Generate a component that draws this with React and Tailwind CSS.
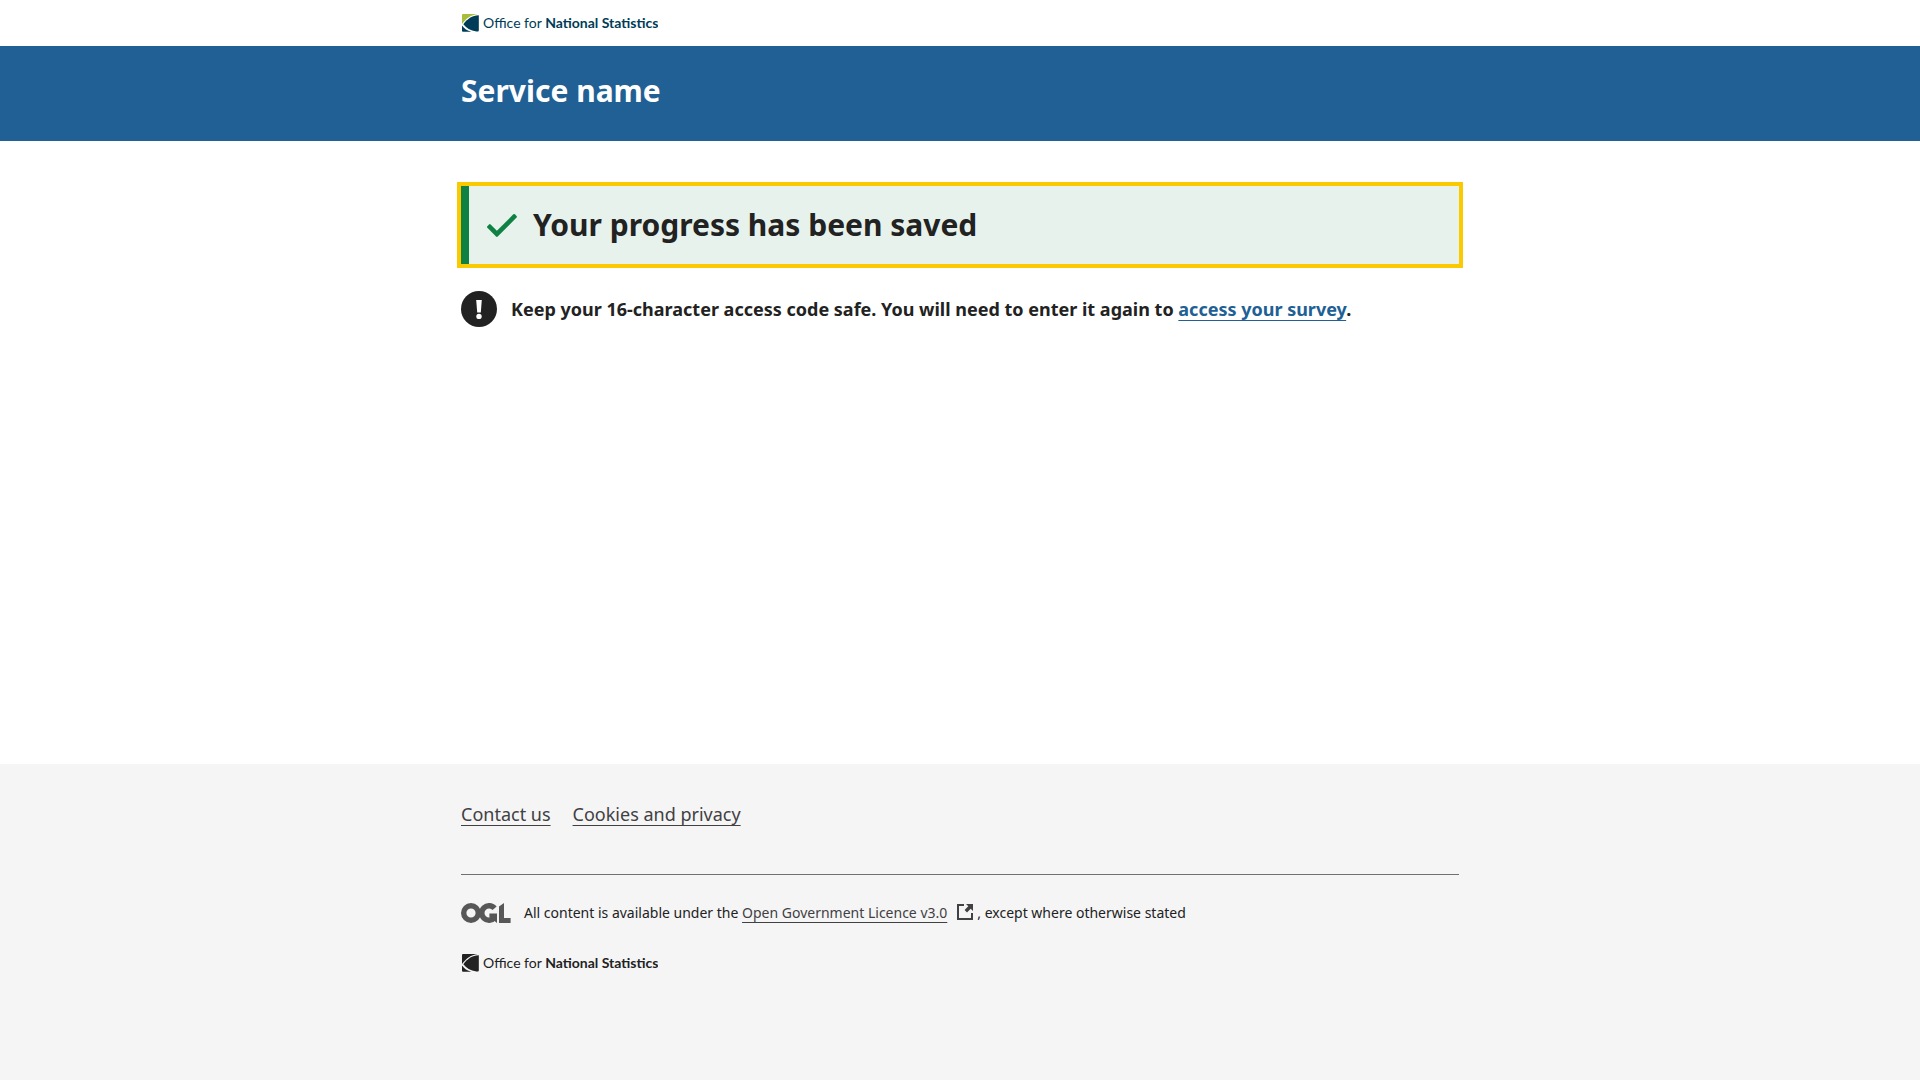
const TEXT_FONT = "font-['Noto_Sans',sans-serif]";

function OnsLogo({ mono = false }) {
  const ink = mono ? "#222222" : "#003c57";
  const accent = mono ? "#222222" : "#a8bd3a";
  return (
    <svg width="197" height="20" viewBox="0 0 197 20" role="img" aria-label="Office for National Statistics">
      <path d="M2 1H16.6C9.8 2 5.4 5.2 1 11V2Q1 1 2 1Z" fill={accent} />
      <path d="M17.8 2.2V17.4Q17.8 18.4 16.8 18.4H15.4C9.4 17.6 5 15 2.4 11.2C6.2 5.8 11 2.6 17.8 2.2Z" fill={ink} />
      <path d="M1 12.6C3 15.6 6.4 18 10.4 18.8H2Q1 18.8 1 17.8Z" fill={ink} />
      <text x="22" y="15" fill={ink} fontSize="14" fontFamily="Lato, sans-serif">
        Office for <tspan fontWeight="700">National Statistics</tspan>
      </text>
    </svg>
  );
}

function OglLogo() {
  return (
    <svg width="50" height="20" viewBox="0 0 50 20" role="img" aria-label="Open Government Licence" className="shrink-0">
      <g fill="none" stroke="#575757" strokeWidth="5.4">
        <circle cx="10" cy="10" r="7.3" />
        <path d="M33.6 5.2A7.3 7.3 0 1 0 33.6 14.8" />
      </g>
      <path d="M28.4 10.5h7.6v9.5l-3.4-2.8L28.4 14.5Z" fill="#575757" />
      <path d="M38 3.4L43 0V15h6.6v5H38Z" fill="#575757" />
    </svg>
  );
}

function CheckIcon() {
  return (
    <svg width="30" height="23" viewBox="0 0 13 10" fill="#0f8243" aria-hidden="true" className="shrink-0">
      <path
        d="M14.35,3.9l-.71-.71a.5.5,0,0,0-.71,0h0L5.79,10.34,3.07,7.61a.51.51,0,0,0-.71,0l-.71.71a.51.51,0,0,0,0,.71l3.78,3.78a.5.5,0,0,0,.71,0h0L14.35,4.6A.5.5,0,0,0,14.35,3.9Z"
        transform="translate(-1.51 -3.04)"
      />
    </svg>
  );
}

function WarningIcon() {
  return (
    <svg width="36" height="36" viewBox="0 0 36 36" role="img" aria-label="Warning" className="shrink-0">
      <circle cx="18" cy="18" r="18" fill="#222222" />
      <path d="M15.2 9H20.8L19.8 21.6H16.2Z" fill="#ffffff" />
      <circle cx="18" cy="25.4" r="2.7" fill="#ffffff" />
    </svg>
  );
}

function ExternalIcon() {
  return (
    <svg width="16" height="16" viewBox="0 0 16 16" fill="#414042" aria-hidden="true" className="mr-1 ml-2.5 inline-block align-[-2px]">
      <path d="M0 0H7V2H2V14H14V9H16V16H0Z" />
      <path d="M9 0H16V7L13.7 4.7L10 8.4L7.6 6L11.3 2.3Z" />
    </svg>
  );
}

function Container({ className = "", children }) {
  return <div className={`mx-auto w-full max-w-[1030px] px-4 ${className}`}>{children}</div>;
}

const footerLinks = ["Contact us", "Cookies and privacy"];

export default function App() {
  return (
    <div className={`flex min-h-screen flex-col bg-white text-lg text-[#222222] ${TEXT_FONT}`}>
      <header>
        <Container className="py-[13px]">
          <a href="#" className="block w-fit">
            <OnsLogo />
          </a>
        </Container>
        <div className="bg-[#206095]">
          <Container className="pt-6 pb-[29px]">
            <div className="text-3xl leading-[42px] font-bold text-white">Service name</div>
          </Container>
        </div>
      </header>

      <main className="grow">
        <Container className="pt-[45px]">
          <div className="flex items-center gap-4 border-l-8 border-[#0f8243] bg-[#e7f2ec] py-[18px] pl-[18px] outline-4 outline-[#fbc900]">
            <CheckIcon />
            <h1 className="text-3xl leading-[42px] font-bold">Your progress has been saved</h1>
          </div>
          <div className="mt-[27px] flex items-center gap-3.5 font-bold">
            <WarningIcon />
            <p>
              Keep your 16-character access code safe. You will need to enter it again to{" "}
              <a href="#" className="text-[#206095] underline decoration-1 underline-offset-4">access your survey</a>.
            </p>
          </div>
        </Container>
      </main>

      <footer className="bg-[#f5f5f6] pt-9 pb-[107px]">
        <Container>
          <ul className="flex gap-[22px]">
            {footerLinks.map((label) => (
              <li key={label}>
                <a href="#" className="text-[#414042] underline decoration-1 underline-offset-4">{label}</a>
              </li>
            ))}
          </ul>
          <hr className="mt-[46px] border-[#707071]" />
          <div className="mt-6 flex items-center gap-[13px] text-sm leading-7">
            <OglLogo />
            <p>
              All content is available under the{" "}
              <a href="#" className="text-[#414042]">
                <span className="underline decoration-1 underline-offset-4">Open Government Licence v3.0</span>
                <ExternalIcon />
              </a>
              , except where otherwise stated
            </p>
          </div>
          <a href="#" className="mt-[26px] block w-fit">
            <OnsLogo mono />
          </a>
        </Container>
      </footer>
    </div>
  );
}
